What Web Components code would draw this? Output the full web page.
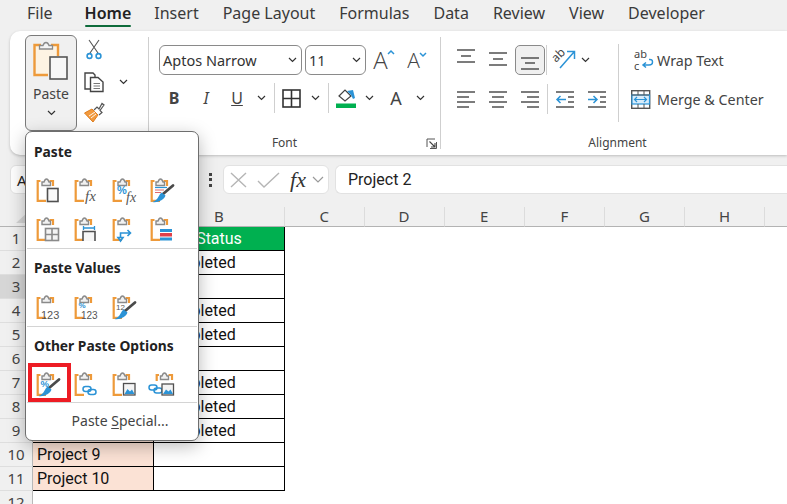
<!DOCTYPE html>
<html><head><meta charset="utf-8"><title>Excel</title>
<style>
html,body{margin:0;padding:0;background:#fff}
body{width:787px;height:504px;overflow:hidden;position:relative;font-family:"Noto Sans","Liberation Sans",sans-serif}
</style></head><body>
<xl-app></xl-app>
<script>
const OR='#ee9a3a',GR='#8a8a8a',DK='#505050',BL='#2b93d6';
const clip=(r=17)=>`<path d="M4.5 3H1.7V22.8H10M13.5 3H${r}V8" fill="none" stroke="${OR}" stroke-width="2.2"/><path d="M6 7.5V4H8Q9 1 10.5 1T13 4H14.5V7.5Z" fill="#f1f1f1" stroke="${GR}" stroke-width="1.4"/>`;
const lines=(a)=>a.map(([x1,x2,y])=>`<path d="M${x1} ${y}H${x2}" stroke="${DK}" stroke-width="1.4"/>`).join('');
const brush=`<path d="M13 16L23 7.500" stroke="#4a4a4a" stroke-width="2.800" stroke-linecap="round"/><path d="M2.500 24C8 25 14 22 15.500 17.500L11.500 14.500C8.500 16.500 9 21.500 2.500 24Z" fill="${BL}"/>`;
const fx=(x,y,fs)=>`<text x="${x}" y="${y}" font-size="${fs}" fill="#555" font-family="Liberation Serif" font-style="italic">fx</text>`;
const pic=`<rect x="11.5" y="11.5" width="11.5" height="11.5" fill="#f4f4f4" stroke="${DK}" stroke-width="1.3"/><path d="M12.5 22L15.5 17L18 19.5L20 17.5L22.5 22Z" fill="${BL}"/>`;
const link=(x,y)=>`<g transform="translate(${x} ${y})" fill="none" stroke="${BL}" stroke-width="1.5"><rect x="0" y="2" width="8" height="5" rx="2.5"/><rect x="5" y="5" width="8" height="5" rx="2.5"/></g>`;
const ICONS={
 p1:clip()+`<rect x="11.5" y="10.5" width="10.5" height="13" fill="#f8f8f8" stroke="${DK}" stroke-width="1.6"/>`,
 p2:clip()+fx(11,22.5,15),
 p3:clip()+`<text x="5" y="15.500" font-size="11" font-weight="700" fill="${BL}" font-family="Liberation Sans">%</text>`+fx(14,23.500,14),
 p4:clip()+`<path d="M5 12H14M5 14.500H11" stroke="#e06a6a" stroke-width="1.2"/><path d="M5 9.500H17" stroke="${BL}" stroke-width="1.2"/>`+brush,
 p5:clip()+`<rect x="9.5" y="11.5" width="13" height="12" fill="#f4f4f4" stroke="${GR}" stroke-width="1.6"/><path d="M16 11.5V23.5M9.5 17.5H22.5" stroke="${GR}" stroke-width="1.6"/>`,
 p6:clip()+`<path d="M9 11H21M9.5 9V13M20.5 9V13" stroke="${BL}" stroke-width="1.3"/><path d="M9 24V14.5H21V24" fill="#f6f6f6" stroke="${DK}" stroke-width="1.6"/>`,
 p7:clip()+`<path d="M8.5 21V16H18M15.5 13L18.5 16L15.5 19M8.5 24L6 20.5H11Z" fill="none" stroke="${BL}" stroke-width="1.6"/>`,
 p8:clip()+`<rect x="10" y="12" width="12" height="3" fill="${BL}"/><rect x="10" y="16" width="12" height="3.5" fill="#e0404a"/><rect x="10" y="20.5" width="12" height="3" fill="${BL}"/>`,
 v1:clip()+`<text x="5" y="23.5" font-size="11" fill="#555" font-family="Liberation Sans">123</text>`,
 v2:clip()+`<text x="4.500" y="12.500" font-size="8" font-weight="700" fill="${BL}" font-family="Liberation Sans">%</text><text x="7" y="24" font-size="10" fill="#555" font-family="Liberation Sans">123</text>`,
 v3:clip()+`<text x="4" y="15" font-size="8" fill="#555" font-family="Liberation Sans">12</text>`+brush,
 o1:clip()+`<text x="4.500" y="15" font-size="9.500" font-weight="700" fill="${BL}" font-family="Liberation Sans">%</text>`+brush,
 o2:clip()+link(9,12.5),
 o3:clip()+pic,
 o4:`<path d="M9 3H6.7V9M18.5 3H22V8" fill="none" stroke="${OR}" stroke-width="2.2"/><path d="M10.5 7.5V4H12Q13 1 14.5 1T17 4H18.5V7.5Z" fill="#f1f1f1" stroke="${GR}" stroke-width="1.4"/>`+link(-1,11)+`<rect x="12" y="12" width="11.5" height="11" fill="#f4f4f4" stroke="${DK}" stroke-width="1.3"/><path d="M13 22L16 17.5L18.5 19.5L20.5 17.5L23 22Z" fill="${BL}"/>`,
 cut:`<path d="M5 1L14 14M15 1L6 14" stroke="#555" stroke-width="1.1" fill="none"/><circle cx="5.5" cy="17" r="2.4" fill="none" stroke="${BL}" stroke-width="1.6"/><circle cx="14.5" cy="17" r="2.4" fill="none" stroke="${BL}" stroke-width="1.6"/>`,
 copy:`<path d="M7 17H1V1H9L11 3V5" fill="none" stroke="#444" stroke-width="1.4"/><path d="M6.5 5.500H14L19 10V19.500H6.500Z" fill="#fff" stroke="#444" stroke-width="1.4"/><path d="M9.500 11.500H16M9.500 14H16M9.500 16.500H16" stroke="#777" stroke-width="1"/>`,
 painter:`<path d="M0.500 11L8 7L14 13L9 20L0.500 11Z" fill="#f29a3e" stroke="#e07f1f" stroke-width="1"/><path d="M5 14L11 10M7 16L12 12" stroke="#fff" stroke-width=".9"/><path d="M10 8L13 5L15 7L18 1.500L20 3L16 8.500L18 10.500L15 13" fill="#fff" stroke="#555" stroke-width="1.2"/>`,
 bigpaste:`<path d="M3 4H24V14H17V32H3Z" fill="#fdf3e3"/><path d="M8 3H1.500V33H15" fill="none" stroke="${OR}" stroke-width="2.400"/><path d="M18 3H25V14" fill="none" stroke="${OR}" stroke-width="2.400"/><path d="M6.500 7V3.500H10Q11 0.500 13 0.500T16 3.500H19.500V7Z" fill="#f4f4f4" stroke="${GR}" stroke-width="1.3"/><rect x="17" y="15" width="17" height="22" fill="#f7f7f7" stroke="#555" stroke-width="1.6"/>`,
 chev:`<path d="M1 1L4.500 4.500L8 1" fill="none" stroke="#333" stroke-width="1.2"/>`,
 borders:`<rect x="1" y="1" width="17" height="17" fill="none" stroke="#333" stroke-width="1.6"/><path d="M9.500 1V18M1 9.500H18" stroke="#333" stroke-width="1.6"/>`,
 fill:`<path d="M3 8L9 2L15 8L9 13Z" fill="#fff" stroke="#444" stroke-width="1.2"/><path d="M11 3L17 2L19 10L17 11L15 7Z" fill="${BL}"/><rect x="0" y="15.500" width="20" height="4.500" fill="#00b050"/>`,
 a1:lines([[3,21,2],[7,17,8],[3,21,14]]),
 a2:lines([[3,21,5],[7,17,11],[3,21,17]]),
 a3:lines([[3,21,10],[7,17,15],[3,21,21]]),
 l1:lines([[3,21,5],[3,15,10],[3,21,15],[3,15,20]]),
 l2:lines([[3,21,5],[6,18,10],[3,21,15],[6,18,20]]),
 l3:lines([[3,21,5],[9,21,10],[3,21,15],[9,21,20]]),
 ind1:`<path d="M3 5H21M15 10H21M15 15H21M3 20H21" stroke="${DK}" stroke-width="1.3"/><path d="M4 12.500H13M7.500 9L4 12.500L7.500 16" fill="none" stroke="${BL}" stroke-width="1.500"/>`,
 ind2:`<path d="M3 5H21M15 10H21M15 15H21M3 20H21" stroke="${DK}" stroke-width="1.3"/><path d="M3 12.500H12M8.500 9L12 12.500L8.500 16" fill="none" stroke="${BL}" stroke-width="1.500"/>`,
 orient:`<text transform="translate(4 14) rotate(-45)" font-size="12" fill="#444" font-family="Noto Sans">ab</text><path d="M8 19L22 3M15 2.500H22.500V10" fill="none" stroke="${BL}" stroke-width="1.500"/>`,
 wrap:`<text x="0" y="8" font-size="11" fill="#444" font-family="Noto Sans">ab</text><text x="0" y="19.500" font-size="11" fill="#444" font-family="Noto Sans">c</text><path d="M9 15H15Q18.500 15 18.500 12T15 9.500M12 12.500L9 15L12 17.500" fill="none" stroke="${BL}" stroke-width="1.500"/>`,
 merge:`<rect x=".7" y=".7" width="18" height="17.600" fill="#fff" stroke="#555" stroke-width="1.4"/><rect x="1" y="5" width="17.500" height="9" fill="#d8ecfa" stroke="${BL}" stroke-width="1.200"/><path d="M1 5H18M7 1V5M13 1V5M7 14V18M13 14V18" stroke="#555" stroke-width="1"/><path d="M3.500 9.500H15.500M6 7L3.500 9.500L6 12M13 7L15.500 9.500L13 12" fill="none" stroke="${BL}" stroke-width="1.200"/>`,
 launcher:`<path d="M1 9V1H9" fill="none" stroke="#555" stroke-width="1"/><path d="M3.500 3.500L9 9M9 5V9H5" fill="none" stroke="#444" stroke-width="1.100"/><path d="M4 10.500H10.500V4" fill="none" stroke="#555" stroke-width="1"/>`,
 up:`<path d="M1 4L4 1L7 4" fill="none" stroke="${BL}" stroke-width="1.500"/>`,
 down:`<path d="M1 1L4 4L7 1" fill="none" stroke="${BL}" stroke-width="1.500"/>`
};
const SIZES={cut:[20,20],copy:[20,20],painter:[21,21],bigpaste:[36,38],chev:[9,6],borders:[19,19],fill:[20,20],launcher:[11,11],orient:[24,22],wrap:[20,20],merge:[20,19],up:[8,5],down:[8,5]};
class XIcon extends HTMLElement{
 connectedCallback(){
  const n=this.getAttribute('n');
  const [w,h]=SIZES[n]||[24,24];
  this.attachShadow({mode:'open'}).innerHTML=`<style>:host{display:flex;align-items:center;justify-content:center}svg{display:block;overflow:visible}</style><svg width="${w}" height="${h}" viewBox="0 0 ${w} ${h}">${ICONS[n]}</svg>`;
 }
}
customElements.define('x-icon',XIcon);

class XTab extends HTMLElement{
 constructor(){super();this.attachShadow({mode:'open'}).innerHTML=`<style>
 :host{display:block;position:relative;font-size:16px;line-height:27px;color:#3a3a3a;height:27px}
 :host([on]){color:#222;font-weight:600}
 :host([on])::after{content:"";position:absolute;left:0;right:0;bottom:0;height:2px;background:#0e6b3b;border-radius:1px}
 </style><slot></slot>`}
}
customElements.define('x-tab',XTab);
class XTabs extends HTMLElement{
 constructor(){super();this.attachShadow({mode:'open'}).innerHTML=`<style>
 :host{display:flex;height:31px;background:#f0f0f0;padding-left:27px;box-sizing:border-box;gap:24px;overflow:hidden;white-space:nowrap}
 </style><slot></slot>`}
}
customElements.define('x-tabs',XTabs);

class XCell extends HTMLElement{
 constructor(){super();this.attachShadow({mode:'open'}).innerHTML=`<style>
 :host{display:flex;align-items:center;justify-content:center;flex:none;height:30px;box-sizing:border-box;color:#444;font-size:16px}
 :host([boxed]){border:1px solid #8a8a8a;border-radius:5px;background:#f0f0f0;margin:0 1px}
 </style><slot></slot>`}
 connectedCallback(){this.style.width=this.getAttribute('w')+'px'}
}
customElements.define('x-cell',XCell);
class XSep extends HTMLElement{
 constructor(){super();this.attachShadow({mode:'open'}).innerHTML=`<style>:host{display:block;flex:none;width:1px;background:#cfcfcf}</style>`}
}
customElements.define('x-sep',XSep);
class XCombo extends HTMLElement{
 constructor(){super();this.attachShadow({mode:'open'}).innerHTML=`<style>
 :host{display:flex;align-items:center;justify-content:space-between;flex:none;height:30px;box-sizing:border-box;border:1px solid #8a8a8a;border-radius:6px;padding:0 4px 0 3px;font-size:14.500px;color:#333;background:#fff;white-space:nowrap}
 </style><slot></slot><x-icon n="chev"></x-icon>`}
 connectedCallback(){this.style.width=this.getAttribute('w')+'px'}
}
customElements.define('x-combo',XCombo);
class XGroup extends HTMLElement{
 constructor(){super();this.attachShadow({mode:'open'}).innerHTML=`<style>
 :host{display:grid;grid-template-rows:98px 1fr;flex:none;height:124px;box-sizing:border-box;position:relative}
 .l{text-align:center;font-size:12px;line-height:28px;color:#444}
 </style><div class="c"><slot></slot></div><div class="l"><slot name="label"></slot></div>`}
 connectedCallback(){this.style.width=this.getAttribute('w')+'px'}
}
customElements.define('x-group',XGroup);
class XRow extends HTMLElement{
 constructor(){super();this.attachShadow({mode:'open'}).innerHTML=`<style>:host{display:flex;align-items:center;height:30px}</style><slot></slot>`}
}
customElements.define('x-row',XRow);

class XRibbon extends HTMLElement{
 constructor(){super();this.attachShadow({mode:'open'}).innerHTML=`<style>
 :host{display:block;height:124px;background:#f0f0f0;position:relative;z-index:1}
 .r{display:flex;height:124px;margin-left:10px;background:#fff;border-radius:10px 0 0 10px;box-shadow:0 1px 3px rgba(0,0,0,.22);overflow:hidden;white-space:nowrap}
 .sp{height:112px;margin-top:6px}
 .clip{display:flex;padding:4px 0 0 15px;height:98px;box-sizing:border-box}
 .pbtn{width:52px;height:96px;box-sizing:border-box;border:1px solid #7a7a7a;border-radius:6px;background:#f0f0f0;display:flex;flex-direction:column;align-items:center;padding-top:6px;font-size:14px;color:#444;line-height:20px}
 .pbtn span{margin-top:4px}.pbtn x-icon:last-child{margin-top:6px}
 .small{display:grid;grid-template-columns:24px 34px;grid-template-rows:34px 31px 31px;margin:-3px 0 0 5px;align-items:center;justify-items:center}
 .rows{display:flex;flex-direction:column;gap:8px;padding:14px 0 0 10px}
 .a-wrap{display:flex}
 .a-rows{display:flex;flex-direction:column;gap:9px;padding:14px 0 0 9px;width:177px;box-sizing:border-box;flex:none}
 .tall{height:78px;margin-top:13px}
 .s2{height:30px}
 .cmd{display:flex;align-items:center;height:30px;gap:5px;font-size:14.300px;color:#444}
 .cols{display:flex;flex-direction:column;gap:9px;padding-top:14px}
 .b{font-weight:700;font-size:16px}.i{font-style:italic;font-size:16px}.u{text-decoration:underline;font-size:16px}
 .A{position:relative;color:#444;line-height:1;font-family:"Open Sans";font-weight:300;display:flex;align-items:flex-start}
 .A x-icon{margin:2px 0 0 -1px}
 </style>
 <div class="r">
  <x-group w="138"><div class="clip"><div class="pbtn"><x-icon n="bigpaste"></x-icon><span>Paste</span><x-icon n="chev"></x-icon></div>
   <div class="small"><x-icon n="cut"></x-icon><span></span><x-icon n="copy"></x-icon><x-icon n="chev"></x-icon><x-icon n="painter"></x-icon><span></span></div></div></x-group>
  <x-sep class="sp"></x-sep>
  <x-group w="291"><div class="rows">
    <x-row><x-combo w="143">Aptos Narrow</x-combo><x-combo w="61" style="margin-left:3px">11</x-combo>
     <x-cell w="36"><span class="A" style="font-size:24px">A<x-icon n="up"></x-icon></span></x-cell><x-cell w="30"><span class="A" style="font-size:21px">A<x-icon n="down"></x-icon></span></x-cell></x-row>
    <x-row><x-cell w="30"><span class="b">B</span></x-cell><x-cell w="34"><span class="i">I</span></x-cell><x-cell w="28"><span class="u">U</span></x-cell><x-cell w="20"><x-icon n="chev"></x-icon></x-cell>
     <x-cell w="6"><x-sep style="height:30px"></x-sep></x-cell><x-cell w="28"><x-icon n="borders"></x-icon></x-cell><x-cell w="20"><x-icon n="chev"></x-icon></x-cell>
     <x-cell w="6"><x-sep style="height:30px"></x-sep></x-cell><x-cell w="30"><x-icon n="fill"></x-icon></x-cell><x-cell w="16"><x-icon n="chev"></x-icon></x-cell>
     <x-cell w="38"><span style="font-size:18px">A</span></x-cell><x-cell w="10"><x-icon n="chev"></x-icon></x-cell></x-row>
   </div><span slot="label" style="margin-right:20px">Font</span><x-icon n="launcher" style="position:absolute;right:3px;bottom:6px"></x-icon></x-group>
  <x-sep class="sp"></x-sep>
  <x-group w="347"><div class="a-wrap">
    <div class="a-rows">
     <x-row><x-cell w="32"><x-icon n="a1"></x-icon></x-cell><x-cell w="32"><x-icon n="a2"></x-icon></x-cell><x-cell w="30" boxed><x-icon n="a3"></x-icon></x-cell><x-sep class="s2"></x-sep><x-cell w="34"><x-icon n="orient"></x-icon></x-cell><x-cell w="8"><x-icon n="chev"></x-icon></x-cell></x-row>
     <x-row><x-cell w="32"><x-icon n="l1"></x-icon></x-cell><x-cell w="32"><x-icon n="l2"></x-icon></x-cell><x-cell w="32"><x-icon n="l3"></x-icon></x-cell><x-sep class="s2" style="margin-left:1px"></x-sep><x-cell w="34"><x-icon n="ind1"></x-icon></x-cell><x-cell w="30"><x-icon n="ind2"></x-icon></x-cell></x-row>
    </div>
    <x-sep class="tall"></x-sep>
    <div class="cols" style="width:169px;flex:none">
     <div class="cmd" style="padding-left:15px;gap:3px"><x-icon n="wrap"></x-icon><span>Wrap Text</span></div>
     <div class="cmd" style="padding-left:12px;gap:6px"><x-icon n="merge"></x-icon><span>Merge &amp; Center</span><x-icon n="chev" style="margin-left:18px"></x-icon></div>
    </div>
   </div><span slot="label" style="margin-left:6px">Alignment</span></x-group>
 </div>`}
}
customElements.define('x-ribbon',XRibbon);

class XFormula extends HTMLElement{
 constructor(){super();this.attachShadow({mode:'open'}).innerHTML=`<style>
 :host{display:flex;height:52px;background:#f0f0f0;padding:10px 0 0 10px;box-sizing:border-box;align-items:flex-start;white-space:nowrap}
 .box{height:29px;box-sizing:border-box;background:#fff;border:1px solid #e2e2e2;border-radius:6px;display:flex;align-items:center}
 .name{width:188px;padding-left:6px;font-size:15px;color:#222}
 .dots{width:25px;height:29px;display:flex;flex-direction:column;align-items:center;justify-content:center;gap:2.500px}
 .dots i{width:3px;height:3px;background:#444;display:block}
 .fx{width:106px;margin-right:6px;color:#444}
 .fx span{font:italic 400 22px "Liberation Serif";color:#333;width:28px;text-align:center}
 .in{flex:1;border-radius:6px 0 0 6px;border-right:0;padding-left:12px;font:16px Roboto,sans-serif;color:#222}
 svg{display:block}
 </style>
 <div class="box name">A3</div>
 <div class="dots"><i></i><i></i><i></i></div>
 <div class="box fx">
  <svg width="30" height="20" viewBox="0 0 30 20"><path d="M7 3L22 17M22 3L7 17" stroke="#b5b5b5" stroke-width="1.400"/></svg>
  <svg width="30" height="20" viewBox="0 0 30 20"><path d="M4 11L10 17L25 3" fill="none" stroke="#b5b5b5" stroke-width="1.400"/></svg>
  <span>fx</span><svg width="12" height="8" viewBox="0 0 12 8"><path d="M1 1L6 6L11 1" fill="none" stroke="#999" stroke-width="1.200"/></svg>
 </div>
 <div class="box in">Project 2</div>`}
}
customElements.define('x-formula',XFormula);

class XSheet extends HTMLElement{
 constructor(){super();
  const cols=['','B','C','D','E','F','G','H',''];
  const W=[121,131,79.500,80,80.500,80,80,80,80];
  const st=['Completed','','Completed','Completed','','Completed','Completed','Completed','',''];
  let h=`<div class="corner"><i></i></div>`+cols.map((c,i)=>`<div class="ch ${i==0?'act':''}">${c}</div>`).join('');
  for(let r=1;r<=12;r++){
   h+=`<div class="rh ${r==3?'act':''}">${r}</div>`;
   let a='',b='',ca='',cb='';
   if(r==1){b='Status';ca='g';cb='g'}
   else if(r<=11){a=r>=10?'Project '+(r-1):'';b=st[r-2];ca='p';cb='w'}
   if(r<=11)h+=`<div class="c b ${ca}">${a}</div><div class="c b e ${cb}">${b}</div>`;
   else h+=`<div class="c"></div><div class="c"></div>`;
   h+=`<div class="c" style="grid-column:span 7"></div>`;
  }
  this.attachShadow({mode:'open'}).innerHTML=`<style>
  :host{display:grid;grid-template-columns:33px ${W.map(w=>w+'px').join(' ')};grid-auto-rows:24px;grid-template-rows:20px;font-family:Roboto,sans-serif;white-space:nowrap;background:#fff}
  .corner{background:#f0f0f0;border-bottom:1px solid #b3b3b3;position:relative;box-sizing:border-box}
  .corner i{position:absolute;right:3px;bottom:3px;width:14px;height:13px;background:#d4d4d4;clip-path:polygon(100% 0,100% 100%,0 100%)}
  .ch{background:#f0f0f0;border-bottom:1px solid #b3b3b3;border-right:1px solid #dcdcdc;box-sizing:border-box;text-align:center;font-size:15px;line-height:19px;color:#444;font-family:"Noto Sans"}
  .rh{background:#f0f0f0;border-bottom:1px solid #dedede;border-right:1px solid #b8b8b8;box-sizing:border-box;text-align:center;font-size:15px;line-height:23px;color:#444;font-family:"Noto Sans"}
  .rh.act,.ch.act{background:#d6d6d6}
  .c{box-sizing:border-box;font-size:16px;line-height:24px;padding-left:4px;color:#111}
  .c.e{padding-left:4px}
  .b{border-bottom:1px solid #000;border-right:1px solid #000}
  .p{background:#fbe2d5}
  .g{background:#00b050;color:#fff}
  .c.e.g{text-align:center;padding:0}
  </style>`+h;
 }
}
customElements.define('x-sheet',XSheet);

class XMenu extends HTMLElement{
 constructor(){super();
  const row=(a,cls='',red=0)=>`<div class="ir ${cls}">${a.map((n,i)=>`<div class="ic">${(red&&i==0)?'<div class="red"></div>':''}<x-icon n="${n}"></x-icon></div>`).join('')}</div>`;
  this.attachShadow({mode:'open'}).innerHTML=`<style>
  :host{display:block;position:absolute;left:25px;top:131px;width:174px;height:310px;box-sizing:border-box;background:#fff;border:1px solid #6e6e6e;border-radius:7px;box-shadow:0 5px 18px rgba(0,0,0,.28);z-index:5;font-family:"Noto Sans";white-space:nowrap}
  .t{height:38px;line-height:40px;font-weight:700;font-size:13.800px;color:#222;padding-left:8px}
  .t.n{height:39px;line-height:38px}
  .ir{display:grid;grid-template-columns:repeat(4,38px);height:39px;padding-left:3px;align-items:center}
  .ir.s{height:38px}.ir.o{height:36px}
  .ic{position:relative;height:100%;display:flex;align-items:center;justify-content:center}
  hr{margin:0 1px;border:0;border-top:1px solid #d4d4d4;height:0}
  .red{position:absolute;left:-1px;right:-4px;top:-3px;bottom:0;border:4px solid #ed1c24;box-sizing:border-box}
  .ps{height:37px;line-height:36px;text-align:center;font-size:14px;color:#444;padding-left:16px}
  u{text-underline-offset:2px}
  </style>
  <div class="t">Paste</div>${row(['p1','p2','p3','p4'])}${row(['p5','p6','p7','p8'])}<hr>
  <div class="t n">Paste Values</div>${row(['v1','v2','v3'],'s')}<hr>
  <div class="t n">Other Paste Options</div>${row(['o1','o2','o3','o4'],'o',1)}<hr>
  <div class="ps">Paste <u>S</u>pecial...</div>`;
 }
}
customElements.define('x-menu',XMenu);

class XApp extends HTMLElement{
 constructor(){super();this.attachShadow({mode:'open'}).innerHTML=`<style>:host{display:block;width:787px;height:504px;overflow:hidden;position:relative}</style>
 <x-tabs><x-tab style="margin-right:8px">File</x-tab><x-tab on style="margin-right:-1px">Home</x-tab><x-tab>Insert</x-tab><x-tab>Page Layout</x-tab><x-tab>Formulas</x-tab><x-tab>Data</x-tab><x-tab>Review</x-tab><x-tab>View</x-tab><x-tab>Developer</x-tab></x-tabs>
 <x-ribbon></x-ribbon><x-formula></x-formula><x-sheet></x-sheet><x-menu></x-menu>`}
}
customElements.define('xl-app',XApp);
</script>
</body></html>
